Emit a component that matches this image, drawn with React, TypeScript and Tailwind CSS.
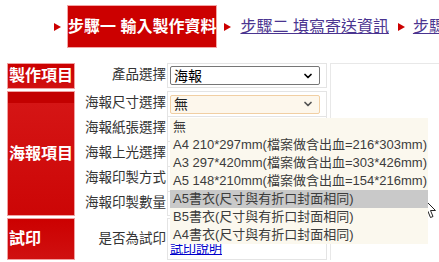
import { ChevronDown } from "lucide-react";

const font = { fontFamily: '"Liberation Sans", "Noto Sans CJK TC", sans-serif' };

const sizeOptions = [
  "無",
  "A4 210*297mm(檔案做含出血=216*303mm)",
  "A3 297*420mm(檔案做含出血=303*426mm)",
  "A5 148*210mm(檔案做含出血=154*216mm)",
  "A5書衣(尺寸與有折口封面相同)",
  "B5書衣(尺寸與有折口封面相同)",
  "A4書衣(尺寸與有折口封面相同)",
];

const Triangle = () => (
  <span className="inline-block w-0 h-0 border-l-[7px] border-l-[#cc0000] border-y-[4px] border-y-transparent" />
);

const Select = ({ value, active }: { value: string; active?: boolean }) => (
  <div
    className={
      active
        ? "ml-[2px] w-[150px] h-[19px] flex items-center justify-between pl-[3px] pr-[5px] rounded-[2px] border border-[#f1cfa3] bg-[#fdf7ec] text-[14px] text-[#222]"
        : "ml-[2px] w-[150px] h-[19px] flex items-center justify-between pl-[3px] pr-[5px] rounded-[2px] border border-[#767676] bg-white text-[14px] text-black"
    }
  >
    <span className="leading-none">{value}</span>
    <ChevronDown size={12} strokeWidth={3.5} className={active ? "text-[#555]" : "text-black"} />
  </div>
);

const Row = ({
  label,
  children,
  last,
  tall,
}: {
  label: string;
  children?: React.ReactNode;
  last?: boolean;
  tall?: boolean;
}) => (
  <div className={tall ? "flex h-[42px]" : "flex h-[25px]"}>
    <div className="w-[90px] flex items-center justify-end pr-[1px] text-[13.5px] text-[#333]">
      {label}
    </div>
    <div
      className={
        last
          ? "w-[160px] border border-[#e4e4e4] flex flex-col justify-center"
          : "w-[160px] border border-b-0 border-[#e4e4e4] flex flex-col justify-center"
      }
    >
      {children}
    </div>
  </div>
);

const RedBox = ({ title, grad }: { title: string; grad?: boolean }) => (
  <div
    className={
      grad
        ? "w-[68px] flex items-center pl-[1px] border border-[#f0a0a0] bg-[linear-gradient(#c30000_0,#c30000_11px,#d51515_11px,#cc0606_100%)] text-white font-bold text-[16px]"
        : "w-[68px] flex items-center pl-[1px] border border-[#f0a0a0] bg-[linear-gradient(#cc0000,#d01010)] text-white font-bold text-[16px]"
    }
  >
    {title}
  </div>
);

const Cursor = () => (
  <svg
    className="absolute left-[424px] top-[199px]"
    width="13"
    height="20"
    viewBox="0 0 13 20"
  >
    <path
      d="M0.5 0.5 L0.5 16 L4 12.5 L6.5 18.5 L9 17.5 L6.5 11.5 L11.5 11.5 Z"
      fill="white"
      stroke="#222"
      strokeWidth="1"
      strokeLinejoin="round"
    />
  </svg>
);

export default function App() {
  return (
    <div className="relative w-[439px] h-[262px] overflow-hidden bg-white" style={font}>
      <div className="flex items-center pt-[5px] h-[63px] pb-[15px]">
        <div className="ml-[54px] flex items-center">
          <Triangle />
        </div>
        <div className="ml-[6px] h-[43px] w-[154px] flex items-center justify-center border border-[#f3a5a5] bg-[#cc0000] text-white font-bold text-[16px] whitespace-nowrap">
          步驟一 輸入製作資料
        </div>
        <div className="ml-[7px] flex items-center">
          <Triangle />
        </div>
        <a className="ml-[9px] text-[16px] text-[#4a3490] underline whitespace-nowrap">
          步驟二 填寫寄送資訊
        </a>
        <div className="ml-[9px] flex items-center">
          <Triangle />
        </div>
        <a className="ml-[8px] text-[16px] text-[#4a3490] underline whitespace-nowrap">
          步驟三
        </a>
      </div>

      <div className="flex">
        <div className="pl-[7px] flex flex-col gap-[2px]">
          <div className="flex gap-[2px]">
            <RedBox title="製作項目" />
            <div className="flex flex-col">
              <Row label="產品選擇" last>
                <Select value="海報" />
              </Row>
            </div>
          </div>

          <div className="flex gap-[2px]">
            <RedBox title="海報項目" grad />
            <div className="flex flex-col">
              <Row label="海報尺寸選擇">
                <div className="relative">
                  <Select value="無" active />
                  <div className="absolute left-[2px] top-[23px] w-[258px] h-[126px] z-10 bg-[#fbf8ee] flex flex-col text-[13px] text-[#3c3c3c]">
                    {sizeOptions.map((o, i) => (
                      <div
                        key={o}
                        className={
                          i === 4
                            ? "h-[18px] flex items-center pl-[3px] bg-[#c9c9c9] whitespace-nowrap"
                            : "h-[18px] flex items-center pl-[3px] whitespace-nowrap"
                        }
                      >
                        {o}
                      </div>
                    ))}
                  </div>
                </div>
              </Row>
              <Row label="海報紙張選擇" />
              <Row label="海報上光選擇" />
              <Row label="海報印製方式" />
              <Row label="海報印製數量" last />
            </div>
          </div>

          <div className="flex gap-[2px]">
            <RedBox title="試印" />
            <div className="flex flex-col">
              <Row label="是否為試印" last tall>
                <div className="h-[18px]" />
                <a className="ml-[2px] text-[13px] leading-[15px] text-[#0000cc] underline">試印說明</a>
              </Row>
            </div>
          </div>
        </div>

        <div className="ml-[3px] flex-1 border-l border-t border-[#e8e8e8]" />
      </div>

      <Cursor />
    </div>
  );
}
